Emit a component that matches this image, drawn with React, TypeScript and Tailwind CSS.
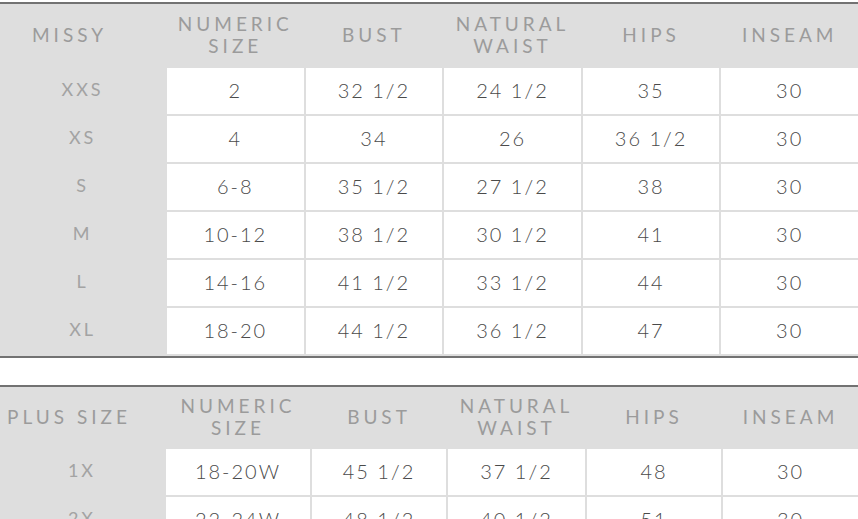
import React from "react";

type Table = {
  label: string;
  cols: string;
  head: string;
  rows: { size: string; values: string[] }[];
};

const headers = [["NUMERIC", "SIZE"], ["BUST"], ["NATURAL", "WAIST"], ["HIPS"], ["INSEAM"]];

const missy: Table = {
  label: "MISSY",
  cols: "grid-cols-[165px_repeat(5,1fr)]",
  head: "h-[62px]",
  rows: [
    { size: "XXS", values: ["2", "32 1/2", "24 1/2", "35", "30"] },
    { size: "XS", values: ["4", "34", "26", "36 1/2", "30"] },
    { size: "S", values: ["6-8", "35 1/2", "27 1/2", "38", "30"] },
    { size: "M", values: ["10-12", "38 1/2", "30 1/2", "41", "30"] },
    { size: "L", values: ["14-16", "41 1/2", "33 1/2", "44", "30"] },
    { size: "XL", values: ["18-20", "44 1/2", "36 1/2", "47", "30"] },
  ],
};

const plus: Table = {
  label: "PLUS SIZE",
  cols: "grid-cols-[164px_144px_134px_137px_134px_1fr]",
  head: "h-[60px]",
  rows: [
    { size: "1X", values: ["18-20W", "45 1/2", "37 1/2", "48", "30"] },
    { size: "2X", values: ["22-24W", "48 1/2", "40 1/2", "51", "30"] },
  ],
};

function SizeTable({ table }: { table: Table }) {
  return (
    <div className="border-y-2 border-[#727272] bg-[#dedede] pb-[2px]">
      <div className={`grid ${table.cols} gap-[2px]`}>
        <div className={`${table.head} pr-[26px] flex items-center justify-center whitespace-nowrap text-[19px] tracking-[0.21em] text-[#9b9b9b]`}>
          {table.label}
        </div>
        {headers.map((h, i) => (
          <div
            key={i}
            className={`${table.head} flex flex-col items-center justify-center text-[19px] leading-[22px] tracking-[0.21em] text-[#9b9b9b]`}
          >
            {h.map((line) => (
              <span key={line}>{line}</span>
            ))}
          </div>
        ))}
        {table.rows.map((r) => (
          <React.Fragment key={r.size}>
            <div className="h-[46px] pb-[3px] flex items-center justify-center text-[18px] tracking-[0.16em] text-[#a3a3a3]">
              {r.size}
            </div>
            {r.values.map((v, i) => (
              <div
                key={i}
                className="h-[46px] pb-[3px] bg-white flex items-center justify-center text-[20px] tracking-[0.1em] text-[#4a4a4a] font-light"
              >
                {v}
              </div>
            ))}
          </React.Fragment>
        ))}
      </div>
    </div>
  );
}

export default function App() {
  return (
    <div className="w-[858px] h-[519px] overflow-hidden bg-white pt-[2px] font-['Lato',sans-serif]">
      <SizeTable table={missy} />
      <div className="h-[27px]" />
      <SizeTable table={plus} />
    </div>
  );
}
